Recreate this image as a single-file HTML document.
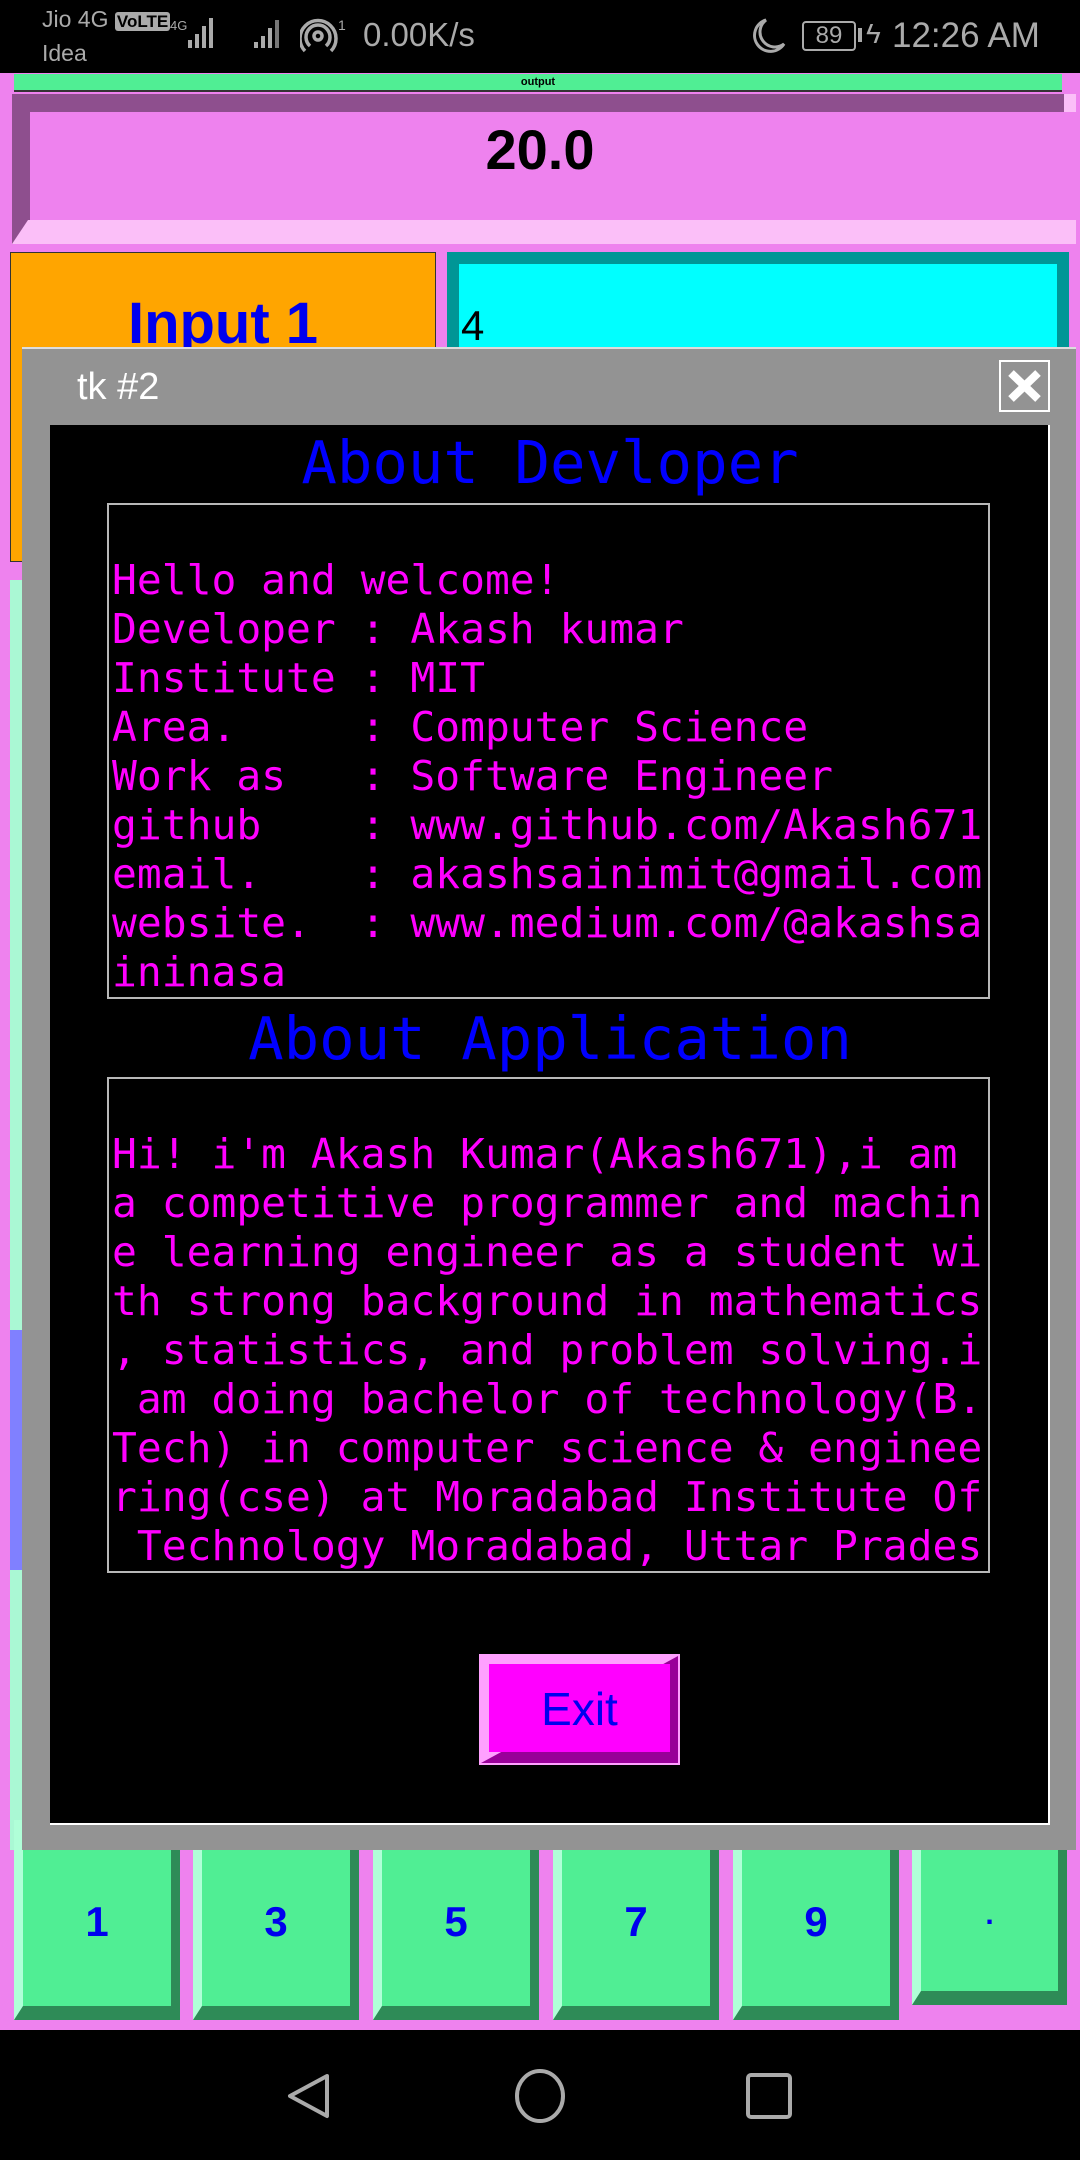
<!DOCTYPE html>
<html><head><meta charset="utf-8"><style>
*{margin:0;padding:0;box-sizing:border-box}
body{width:1080px;height:2160px;background:#ee82ee;position:relative;overflow:hidden;font-family:"Liberation Sans",sans-serif}
.abs{position:absolute}
.mono{font-family:"DejaVu Sans Mono","Liberation Mono",monospace}
.box{position:absolute;left:107px;width:883px;height:496px;border:2px solid #b8b8b8;overflow:hidden;color:#ff00ff;font-size:41.3px;line-height:49px;white-space:pre;padding:2px 0 0 3px}
.key{position:absolute;top:1820px;height:200px;background:#50ee94;border-left:9px solid #b0ffd8;border-bottom:14px solid #2e8b57;border-right:9px solid #2e8b57;color:#0000ee;font-weight:bold;font-size:42px;text-align:center;line-height:204px}
</style></head><body>
<!-- status bar -->
<div class="abs" style="left:0;top:0;width:1080px;height:73px;background:#000"></div>
<div class="abs" style="left:42px;top:6px;color:#aaa;font-size:23px">Jio 4G <span style="background:#aaa;color:#000;font-size:17px;font-weight:bold;padding:0 2px;border-radius:3px">VoLTE</span></div>
<div class="abs" style="left:42px;top:40px;color:#aaa;font-size:23px">Idea</div>
<svg class="abs" style="left:168px;top:14px" width="130" height="40"><g fill="#aaa"><text x="2" y="16" font-size="13" font-family="Liberation Sans">4G</text><rect x="20" y="26" width="4" height="8"/><rect x="27" y="20" width="4" height="14"/><rect x="34" y="12" width="4" height="22"/><rect x="41" y="4" width="4" height="30"/><rect x="86" y="28" width="4" height="6"/><rect x="93" y="22" width="4" height="12"/><rect x="100" y="14" width="4" height="20"/><rect x="107" y="6" width="4" height="28" fill="#777"/></g></svg>
<svg class="abs" style="left:300px;top:16px" width="50" height="40"><g fill="none" stroke="#aaa" stroke-width="3.5"><circle cx="18" cy="20" r="4"/><path d="M10 30a12 12 0 1 1 16 0"/><path d="M5 35a18 18 0 1 1 26 0"/></g><text x="38" y="14" font-size="14" fill="#aaa" font-family="Liberation Sans">1</text></svg>
<div class="abs" style="left:363px;top:16px;color:#aaa;font-size:33px">0.00K/s</div>
<svg class="abs" style="left:748px;top:16px" width="40" height="44"><path d="M18 4a16 16 0 1 0 18 24a14 14 0 0 1-18-24z" fill="none" stroke="#aaa" stroke-width="3"/></svg>
<div class="abs" style="left:802px;top:21px;width:54px;height:30px;border:2px solid #aaa;border-radius:4px;color:#aaa;font-size:24px;line-height:26px;text-align:center">89</div>
<div class="abs" style="left:858px;top:28px;width:4px;height:14px;background:#aaa"></div>
<div class="abs" style="left:866px;top:18px;color:#aaa;font-size:28px">ϟ</div>
<div class="abs" style="left:892px;top:16px;color:#aaa;font-size:35px">12:26 AM</div>

<!-- background app -->
<div class="abs" style="left:14px;top:74px;width:1048px;height:18px;background:#50ee94;border-bottom:2px solid #333;font-size:11px;text-align:center;line-height:16px;font-weight:bold">output</div>
<div class="abs" style="left:12px;top:94px;width:1064px;height:150px;background:#8e4f8e"></div>
<div class="abs" style="left:12px;top:220px;width:1064px;height:24px;background:#fbbff8;clip-path:polygon(16px 0,100% 0,100% 100%,0 100%)"></div>
<div class="abs" style="left:30px;top:112px;width:1050px;height:108px;background:#ee82ee;text-align:center;font-weight:bold;font-size:56px;line-height:76px;padding-right:30px">20.0</div>
<div class="abs" style="left:1064px;top:94px;width:12px;height:18px;background:#fbbff8"></div>
<div class="abs" style="left:10px;top:252px;width:426px;height:310px;background:#ffa500;border:1px solid #333"></div>
<div class="abs" style="left:10px;top:290px;width:426px;text-align:center;color:#0000ee;font-weight:bold;font-size:58px">Input 1</div>
<div class="abs" style="left:447px;top:252px;width:622px;height:200px;background:#009696"></div>
<div class="abs" style="left:459px;top:264px;width:598px;height:200px;background:#00ffff;font-size:42px;padding:38px 0 0 2px">4</div>
<div class="abs" style="left:10px;top:580px;width:12px;height:1270px;background:#aaf8d4"></div>
<div class="abs" style="left:10px;top:1330px;width:12px;height:240px;background:#8080ff"></div>

<!-- keypad -->
<div class="key" style="left:14px;width:166px">1</div>
<div class="key" style="left:193px;width:166px">3</div>
<div class="key" style="left:373px;width:166px">5</div>
<div class="key" style="left:553px;width:166px">7</div>
<div class="key" style="left:733px;width:166px">9</div>
<div class="key" style="left:912px;width:155px;height:185px;line-height:190px;font-size:30px">.</div>
<div class="abs" style="left:0;top:2030px;width:1080px;height:130px;background:#000"></div>
<svg class="abs" style="left:0;top:2030px" width="1080" height="130"><g fill="none" stroke="#aaa" stroke-width="4"><path d="M327 46L290 66L327 86Z" stroke-linejoin="round"/><ellipse cx="540" cy="66" rx="23" ry="25"/><rect x="748" y="45" width="42" height="42" rx="3"/></g></svg>

<!-- dialog -->
<div class="abs" style="left:22px;top:347px;width:1054px;height:1503px;background:#939393;border-top:2px solid #ddd"></div>
<div class="abs" style="left:77px;top:366px;color:#fff;font-size:38px">tk #2</div>
<div class="abs" style="left:999px;top:360px;width:51px;height:52px;border:2px solid #fff"></div>
<svg class="abs" style="left:999px;top:360px" width="51" height="52"><path d="M12 13L39 39M39 13L12 39" stroke="#fff" stroke-width="8"/></svg>
<div class="abs" style="left:50px;top:425px;width:1000px;height:1400px;background:#000;border-right:2px solid #fff;border-bottom:2px solid #fff"></div>
<div class="abs mono" style="left:50px;top:428px;width:1000px;text-align:center;color:#0000ff;font-size:59px;line-height:70px">About Devloper</div>
<div class="box mono" style="top:503px">
Hello and welcome!
Developer : Akash kumar
Institute : MIT
Area.     : Computer Science
Work as   : Software Engineer
github    : www.github.com/Akash671
email.    : akashsainimit@gmail.com
website.  : www.medium.com/@akashsa
ininasa</div>
<div class="abs mono" style="left:50px;top:1004px;width:1000px;text-align:center;color:#0000ff;font-size:59px;line-height:70px">About Application</div>
<div class="box mono" style="top:1077px">
Hi! i'm Akash Kumar(Akash671),i am 
a competitive programmer and machin
e learning engineer as a student wi
th strong background in mathematics
, statistics, and problem solving.i
 am doing bachelor of technology(B.
Tech) in computer science &amp; enginee
ring(cse) at Moradabad Institute Of
 Technology Moradabad, Uttar Prades</div>
<div class="abs" style="left:479px;top:1654px;width:201px;height:111px;background:#990099;border:2px solid #ffa0ff"></div>
<div class="abs" style="left:481px;top:1656px;width:197px;height:107px;background:#ffa0ff;clip-path:polygon(0 0,100% 0,0 100%)"></div>
<div class="abs" style="left:489px;top:1664px;width:181px;height:88px;background:#ff00ff;color:#0000ee;font-size:46px;text-align:center;line-height:90px">Exit</div>
</body></html>
